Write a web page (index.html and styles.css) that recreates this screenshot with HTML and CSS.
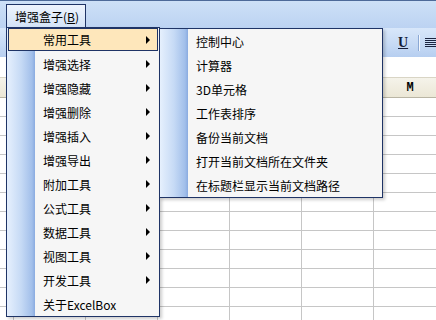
FILE: index.html
```html
<!DOCTYPE html>
<html lang="zh-CN">

<head>
    <meta charset="UTF-8">
    <meta name="viewport" content="width=device-width, initial-scale=1.0">
    <title>ExcelBox menu</title>
    <link rel="stylesheet" href="styles.css">
</head>

<body>
    <div class="window">
        <div class="menubar">
            <span class="menu-title">增强盒子(<u>B</u>)</span>
        </div>

        <div class="toolbar">
            <span class="tb-u">U</span>
            <span class="tb-sep"></span>
            <svg class="tb-align" width="11" height="10" viewBox="0 0 11 10">
                <path d="M0 0.5h11M0 2.5h11M0 4.5h11M0 6.5h11M0 8.5h11" stroke="#1b2440" stroke-width="1" />
            </svg>
        </div>

        <div class="formula"></div>

        <div class="sheet">
            <b></b><b></b><b></b><b></b><b></b><b></b><b>M</b>
            <i></i><i></i><i></i><i></i><i></i><i></i><i></i>
            <i></i><i></i><i></i><i></i><i></i><i></i><i></i>
            <i></i><i></i><i></i><i></i><i></i><i></i><i></i>
            <i></i><i></i><i></i><i></i><i></i><i></i><i></i>
            <i></i><i></i><i></i><i></i><i></i><i></i><i></i>
            <i></i><i></i><i></i><i></i><i></i><i></i><i></i>
            <i></i><i></i><i></i><i></i><i></i><i></i><i></i>
            <i></i><i></i><i></i><i></i><i></i><i></i><i></i>
            <i></i><i></i><i></i><i></i><i></i><i></i><i></i>
            <i></i><i></i><i></i><i></i><i></i><i></i><i></i>
            <i></i><i></i><i></i><i></i><i></i><i></i><i></i>
            <i></i><i></i><i></i><i></i><i></i><i></i><i></i>
        </div>

        <!-- main dropdown -->
        <div class="menu menu-main">
            <div class="item active">常用工具<span class="arrow"></span></div>
            <div class="item">增强选择<span class="arrow"></span></div>
            <div class="item">增强隐藏<span class="arrow"></span></div>
            <div class="item">增强删除<span class="arrow"></span></div>
            <div class="item">增强插入<span class="arrow"></span></div>
            <div class="item">增强导出<span class="arrow"></span></div>
            <div class="item">附加工具<span class="arrow"></span></div>
            <div class="item">公式工具<span class="arrow"></span></div>
            <div class="item">数据工具<span class="arrow"></span></div>
            <div class="item">视图工具<span class="arrow"></span></div>
            <div class="item">开发工具<span class="arrow"></span></div>
            <div class="item">关于ExcelBox</div>
        </div>

        <!-- submenu of 常用工具 -->
        <div class="menu menu-sub">
            <div class="item">控制中心</div>
            <div class="item">计算器</div>
            <div class="item">3D单元格</div>
            <div class="item">工作表排序</div>
            <div class="item">备份当前文档</div>
            <div class="item">打开当前文档所在文件夹</div>
            <div class="item">在标题栏显示当前文档路径</div>
        </div>
    </div>
</body>

</html>
```

FILE: styles.css
```css
* {
    margin: 0;
    padding: 0;
    box-sizing: border-box;
}

body {
    width: 436px;
    height: 320px;
    overflow: hidden;
    background-color: #fff;
    color: #000;
    font-family: "Noto Sans CJK SC", "Noto Sans", sans-serif;
    font-size: 12px;
}

.window {
    position: relative;
    width: 436px;
    height: 320px;
    overflow: hidden;
}

.menubar {
    height: 28px;
    padding: 3px 0 0 6px;
    border-top: 1px solid #4d6a99;
    background: linear-gradient(#cde0f7, #bcd3f2);
}

.menu-title {
    display: inline-flex;
    align-items: center;
    width: 80px;
    height: 24px;
    padding-left: 8px;
    border: 1px solid #1f3466;
    border-bottom: none;
    background: linear-gradient(#eef4fd, #d2e2f7);
}

.toolbar {
    height: 29px;
    display: flex;
    align-items: center;
    justify-content: flex-end;
    background: linear-gradient(#d8e7fa, #c5d9f4 60%, #b6cef0);
}

.tb-u {
    width: 10px;
    text-align: center;
    font-family: "Liberation Serif", serif;
    font-weight: bold;
    font-size: 14px;
    line-height: 14px;
    color: #141c36;
    text-decoration: underline;
}

.tb-sep {
    width: 2px;
    height: 16px;
    margin: 0 5px 0 10px;
    border-left: 1px solid #8ba8d4;
    border-right: 1px solid #f4f8fd;
}

.formula {
    height: 20px;
    background-color: #fff;
}

.sheet {
    display: grid;
    grid-template-columns: 14px repeat(6, 72px);
    grid-template-rows: 21px;
    grid-auto-rows: 19px;
}

.sheet b {
    display: flex;
    align-items: center;
    justify-content: center;
    border-top: 1px solid #d9d5c5;
    border-bottom: 1px solid #b9b5a4;
    background: linear-gradient(#f5f3ea, #ebe7d6);
    font-family: "Liberation Mono", monospace;
    font-size: 12px;
    font-weight: bold;
}

.sheet i {
    border-right: 1px solid #c6c6c6;
    border-bottom: 1px solid #c6c6c6;
}

.menu {
    position: absolute;
    border: 1px solid #1f3466;
    background: linear-gradient(90deg, #e6f0fd 0, #c6daf5 14px, #a2bfea 25px, #8aabe0 28px, #f6f6f6 28px);
    box-shadow: 2px 2px 3px rgba(0, 0, 0, 0.2);
}

.menu-main {
    left: 6px;
    top: 27px;
    width: 154px;
}

.menu-sub {
    left: 159px;
    top: 28px;
    width: 224px;
}

.item {
    height: 24px;
    display: flex;
    align-items: center;
    justify-content: space-between;
    padding: 0 9px 0 36px;
    white-space: nowrap;
}

.item.active {
    height: 23px;
    margin: 0 1px 1px 1px;
    padding: 0 7px 0 34px;
    border: 1px solid #1f3466;
    background-color: #fee7bb;
}

.arrow {
    width: 0;
    height: 0;
    border-style: solid;
    border-width: 4px 0 4px 4px;
    border-color: transparent transparent transparent #000;
}
```
